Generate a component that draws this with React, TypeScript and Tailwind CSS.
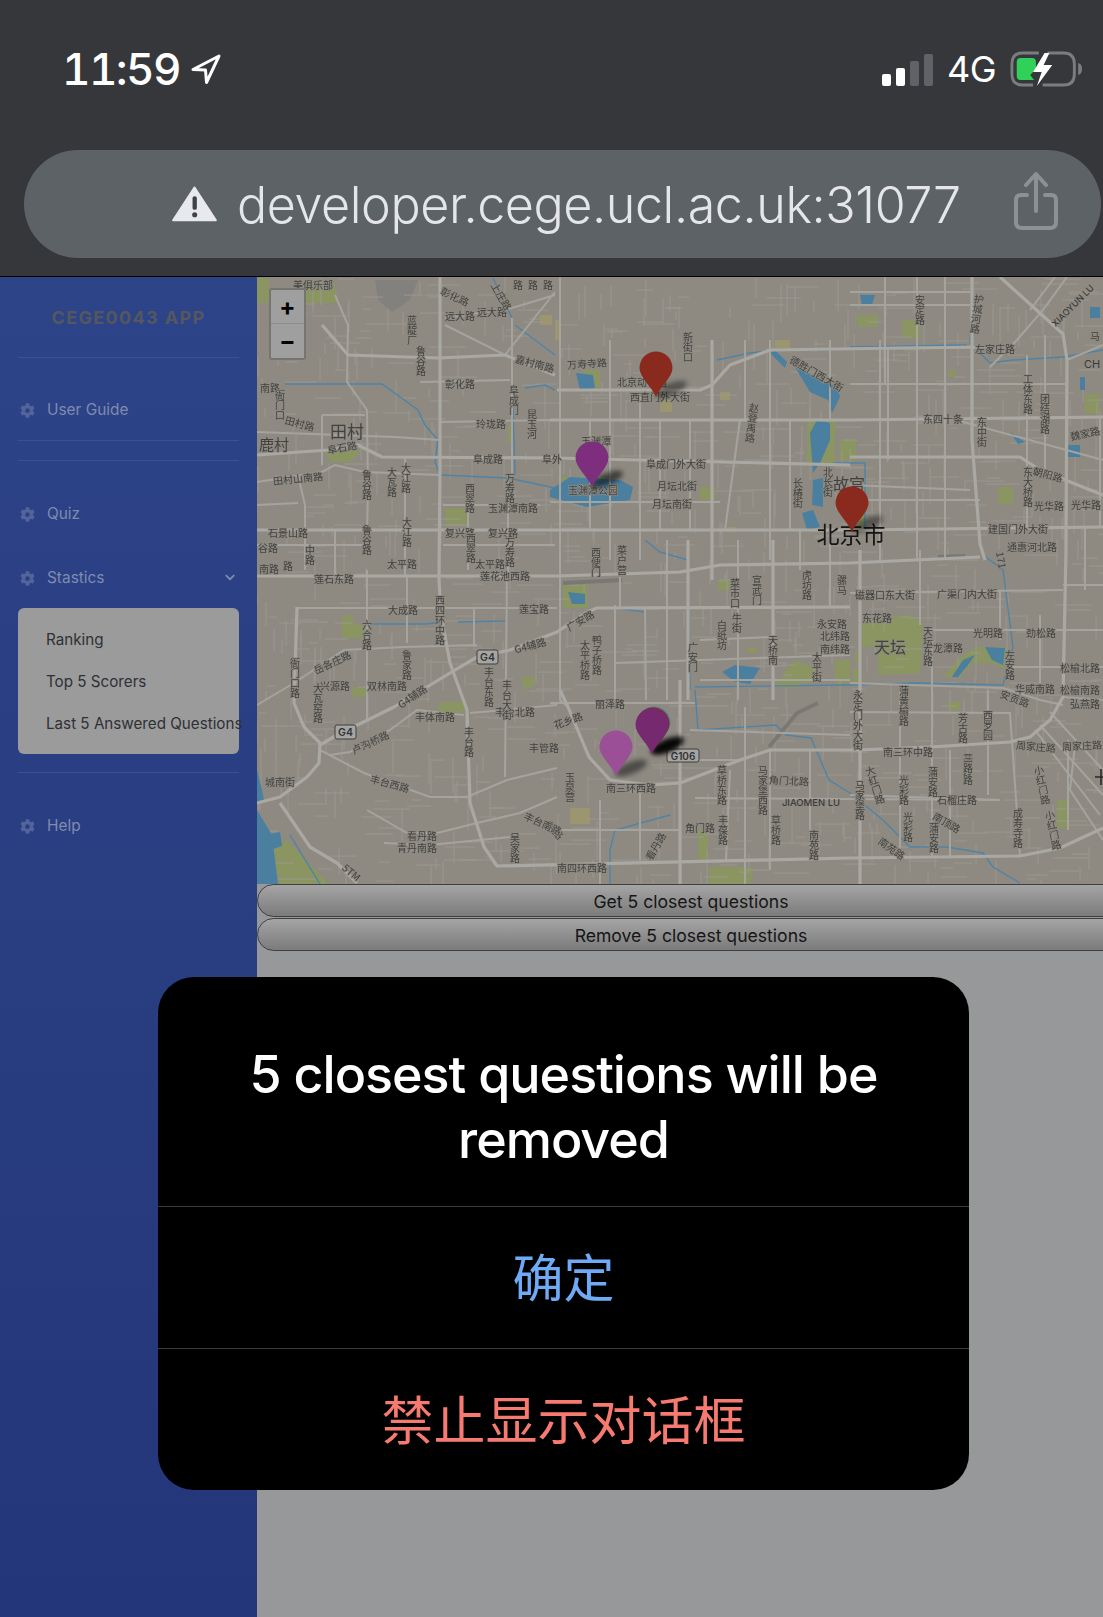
import React from "react";
import { FaCog, FaChevronDown } from "react-icons/fa";

const majorRoads: string[] = [
  "440,277 440,470 439,580 441,615 450,663 467,710 470,803 484,847 497,866 850,858 1020,856 1060,848 1103,828",
  "320,745 337,735 394,707 450,673 477,657 510,650 557,632 587,612 597,608 850,607",
  "1000,277 1063,334 1067,360 1066,550 1063,697 1050,720 1030,737 1010,742 930,747 857,750 770,750 740,760 680,783 650,785 610,780 589,757 568,707 560,690",
  "257,530 550,530 850,530 1103,527",
  "257,576 557,576 680,572 720,565 850,563 980,557",
  "257,455 328,450 358,445 382,457 555,458 850,465",
  "557,390 700,390 712,385 730,365 770,350 900,348 990,347",
  "322,325 348,355 438,358 505,355 555,375",
  "550,420 850,420 1103,417",
  "850,457 1020,457 1040,470 1103,495",
  "712,340 712,580",
  "972,277 972,440 980,544 985,560",
  "688,540 688,700",
  "773,540 773,700",
  "680,680 680,884",
  "860,550 860,884",
  "280,803 310,847 337,863 357,883",
  "297,607 294,703 304,727 320,743 319,763 307,777 280,797 257,803",
];

const midRoads: string[] = [
  "560,277 560,700 568,707",
  "257,705 294,683 344,650 404,647 477,645",
  "320,750 364,773 430,797 467,797 507,780 557,768",
  "330,755 350,752 390,730 417,710 464,715",
  "470,713 557,705",
  "367,810 407,833 437,833 477,823 520,813 557,797",
  "384,843 430,845 510,837",
  "367,570 367,720",
  "407,577 407,643",
  "507,570 505,777",
  "474,608 474,647",
  "297,608 557,608",
  "335,295 348,325 347,382 367,410 368,490 367,530",
  "445,325 505,355 555,292",
  "445,318 512,308 555,295",
  "420,382 510,380",
  "440,422 555,420",
  "257,432 395,437 440,440",
  "257,482 322,472 335,465 365,472 440,475",
  "298,475 305,505 305,570",
  "322,415 322,465",
  "322,415 365,415",
  "257,505 298,503",
  "257,545 368,545",
  "443,505 540,505",
  "443,545 555,545",
  "512,318 512,478",
  "468,488 468,570",
  "508,475 508,575",
  "405,457 405,577",
  "335,530 335,575",
  "610,340 610,560",
  "640,397 640,560",
  "770,340 770,560",
  "880,340 880,560",
  "740,420 725,530",
  "550,502 720,502",
  "610,465 610,530",
  "667,540 667,700",
  "738,540 738,700",
  "615,605 615,700",
  "615,663 850,655",
  "645,608 646,700",
  "700,640 773,637",
  "550,703 695,703",
  "745,707 745,884",
  "695,798 1000,800",
  "850,593 1063,590",
  "850,683 1003,688 1040,700 1063,705",
  "850,712 1010,713 1020,856",
  "932,640 932,858",
  "920,550 920,625",
  "988,690 988,795",
  "850,292 970,292",
  "850,305 970,305",
  "850,384 1065,384",
  "885,277 885,384",
  "888,347 888,460",
  "917,277 917,560",
  "945,277 945,560",
  "1027,355 1027,530",
  "1045,335 1045,470",
  "1067,360 1103,345",
  "1067,277 1043,310 1017,340 990,367",
  "1055,277 1030,310",
  "850,485 970,490",
  "850,500 980,500",
  "1063,585 1103,585",
  "930,630 1103,630",
  "1010,667 1103,667",
  "1063,697 1103,700",
  "1040,615 1040,690",
  "1050,712 1103,770",
  "1040,725 1103,795",
  "1035,730 1100,815",
  "1075,745 1070,790 1103,840",
  "900,690 900,860",
  "850,795 1000,800",
  "790,420 790,530",
  "830,340 830,420",
  "590,420 590,530",
  "660,420 660,530",
  "690,420 690,530",
  "745,340 745,420",
  "800,530 800,570",
  "830,530 830,607",
  "620,577 620,607",
  "700,680 850,680",
  "690,730 850,735",
  "695,760 740,760",
  "810,750 810,860",
  "770,750 770,870",
  "730,770 726,860",
  "600,800 600,884",
  "640,790 640,860",
  "550,830 680,830",
  "950,750 950,858",
  "1100,417 1100,527",
  "1085,527 1085,590",
  "1000,590 1000,640",
  "1068,740 1068,830",
  "945,417 1103,460",
];

const water: string[] = [
  "257,770 262,790 264,800 257,803",
  "257,810 272,835 278,884 257,884",
  "265,835 280,832 282,846 270,850",
  "550,490 570,477 620,480 633,487 630,500 587,507 550,497",
  "576,373 593,375 595,388 580,390",
  "810,433 817,420 830,423 830,440 820,463 813,473",
  "813,480 823,478 823,507 812,505",
  "802,513 813,510 820,527 807,530",
  "770,353 775,350 787,362 785,368",
  "795,367 837,387 840,397 832,413 828,400 810,392",
  "568,592 585,594 585,604 572,604",
  "722,672 735,665 760,668 750,684 735,682",
  "1080,377 1085,377 1085,390 1080,390",
  "1090,307 1100,307 1100,318 1090,318",
  "952,677 963,660 975,655 968,665 958,677",
  "985,647 1005,648 1003,665 992,660",
  "860,295 875,295 872,305 862,305",
  "1068,445 1080,445 1080,457 1068,457",
  "1010,432 1025,442 1018,444",
];

const parks: string[] = [
  "257,278 269,278 269,303 257,303",
  "305,285 335,285 338,303 305,303",
  "323,450 362,450 350,462 330,462",
  "445,508 468,508 468,526 445,526",
  "508,425 513,425 513,443 508,443",
  "341,617 352,615 354,623 365,627 365,638 342,638",
  "352,687 366,687 366,697 352,697",
  "520,677 535,677 535,685 525,690",
  "439,702 465,702 465,712 439,712",
  "270,847 287,840 329,884 280,884",
  "583,370 600,370 600,387 590,387",
  "560,477 605,477 605,485 560,485",
  "807,420 835,420 835,463 807,463",
  "840,440 856,440 856,460 840,460",
  "848,510 866,510 866,530 848,530",
  "902,320 920,320 920,338 902,338",
  "857,315 878,315 878,327 857,327",
  "948,370 955,370 955,377 948,377",
  "1085,394 1100,394 1100,414 1085,414",
  "998,487 1013,487 1013,504 998,504",
  "862,625 870,618 910,615 923,623 920,673 878,675 878,647 862,647",
  "943,677 960,657 977,647 1007,647 1003,668 990,663 973,663 960,677",
  "948,702 960,702 960,710 948,710",
  "855,652 860,652 860,662 855,662",
  "853,668 859,668 859,683 853,683",
  "1057,800 1067,800 1067,828 1057,828",
  "698,830 708,830 708,860 698,860",
  "709,867 754,867 750,884 709,884",
  "563,585 588,585 588,608 563,608",
  "718,580 730,580 730,590 718,590",
  "747,648 757,648 757,653 747,653",
  "783,673 796,660 817,670 817,683 783,683",
  "835,660 850,660 850,683 835,683",
  "776,680 800,680 800,687 776,687",
  "700,487 715,487 715,500 700,500",
];

const yellows: string[] = [
  "570,808 590,808 590,824 570,824",
  "660,400 672,400 672,412 660,412",
  "775,340 790,340 790,348 775,348",
  "727,527 735,527 735,532 727,532",
  "720,392 730,392 730,400 720,400",
  "555,320 560,320 560,340 555,340",
  "540,315 552,315 552,325 540,325",
];

const blueLines: string[] = [
  "285,384 382,384 418,410 425,425 438,440 435,462 440,475 508,478 555,488",
  "493,278 512,318 512,375 515,475",
  "515,325 555,355",
  "525,388 545,385 555,390",
  "717,360 750,353 777,350 833,350",
  "850,347 967,345",
  "973,297 970,343 990,363 1013,360 1063,357 1103,350",
  "850,685 917,683 1003,685 1013,647 1003,570 983,555",
  "850,793 883,820 910,847 947,847 983,853 993,867 1020,883",
  "698,730 776,725 786,735 811,738 829,780 850,793",
  "695,687 850,685",
  "695,690 698,730",
  "645,540 660,552 688,560 690,690",
  "615,608 645,612 646,690",
  "370,624 425,624 445,622",
  "458,622 505,621",
  "833,463 865,463 865,530",
  "610,850 615,830 670,815",
  "610,884 610,850",
  "290,835 320,884",
];

type Label = [string, number, number, number?, boolean?, number?];

const labels: Label[] = [
  ["美俱乐部", 313, 284], ["远大路", 460, 315], ["远大路", 492, 311], ["彰化路", 460, 383],
  ["玲珑路", 491, 423], ["田村路", 300, 423, 15], ["田村", 347, 430, 0, false, 17], ["鹿村", 274, 443, 0, false, 15],
  ["阜石路", 342, 447, -10], ["阜成路", 488, 458], ["南路", 270, 387], ["田村山南路", 298, 478, -6],
  ["石景山路", 288, 532], ["谷路", 268, 547], ["南路", 269, 568], ["太平路", 402, 563], ["太平路", 490, 563],
  ["复兴路", 460, 532], ["复兴路", 503, 532], ["玉渊潭南路", 513, 507], ["彰化路", 455, 296, 25],
  ["蓝靛厂", 412, 330, 0, true], ["鲁谷路", 421, 361, 0, true], ["阜成门", 514, 400, 0, true], ["昆玉河", 532, 424, 0, true],
  ["鲁谷路", 367, 485, 0, true], ["大瓦路", 392, 482, 0, true], ["大江路", 406, 478, 0, true], ["西翠路", 470, 498, 0, true],
  ["鲁谷路", 367, 540, 0, true], ["大江路", 407, 532, 0, true], ["西翠路", 471, 548, 0, true], ["万寿路", 510, 488, 0, true],
  ["万寿路", 510, 552, 0, true], ["衙门口", 280, 405, 0, true], ["中路", 310, 555, 0, true], ["路", 288, 565],
  ["上庄路", 502, 296, 60], ["路", 518, 285, 0, true], ["路", 533, 285, 0, true], ["路", 548, 285, 0, true], ["嘉村南路", 535, 363, 15],
  ["万寿寺路", 587, 363, -4], ["北京动物园", 642, 381], ["西直门外大街", 660, 396], ["玉渊潭公园", 593, 489],
  ["阜成门外大街", 676, 463], ["月坛北街", 677, 485], ["月坛南街", 672, 503], ["赵登禹路", 752, 423, 8, true],
  ["长椿街", 798, 493, 0, true], ["故宫", 849, 483, 0, false, 16], ["北长街", 828, 482, 0, true], ["新街口", 688, 347, 0, true],
  ["德胜门西大街", 817, 373, 30], ["阜外", 552, 458], ["玉渊潭", 596, 440], ["北京市", 851, 533, 0, false, 23],
  ["左家庄路", 995, 348], ["东四十条", 943, 418], ["东中街", 982, 432, 0, true], ["安定路", 920, 310, 0, true],
  ["护城河路", 977, 314, 8, true], ["朝阳路", 1048, 474, 15], ["建国门外大街", 1018, 528], ["通惠河北路", 1032, 546],
  ["光华路", 1049, 505], ["光华路", 1086, 504], ["东大桥路", 1028, 487, 0, true], ["工体东路", 1028, 394, 0, true],
  ["团结湖路", 1045, 414, 0, true], ["魏家路", 1085, 433, -12], ["马", 1095, 335], ["171", 1002, 560, 80],
  ["磁器口东大街", 885, 594], ["广渠门内大街", 967, 593], ["东花路", 877, 617], ["天坛", 890, 646, 0, false, 16],
  ["天坛东路", 928, 646, 0, true], ["龙潭路", 948, 647], ["光明路", 988, 632], ["劲松路", 1041, 632], ["左安路", 1010, 665, 0, true],
  ["松榆北路", 1080, 667], ["松榆南路", 1080, 689], ["华威南路", 1035, 688], ["弘燕路", 1085, 703], ["安贡路", 1015, 698, 20],
  ["南三环中路", 908, 751], ["周家庄路", 1036, 746, 5], ["周家庄路", 1082, 745, -3], ["石榴庄路", 957, 799],
  ["永定门外大街", 858, 720, 0, true], ["蒲黄榆路", 904, 706, 0, true], ["芳古路", 963, 728, 0, true], ["蒲方路", 968, 770, 0, true],
  ["成寿寺路", 1018, 828, 0, true], ["小红门路", 1042, 785, -12, true], ["小红门路", 1053, 830, -12, true],
  ["南苑路", 892, 848, 35], ["南顶路", 947, 822, 30], ["大红门路", 875, 785, -18, true], ["马家堡路", 860, 800, 0, true],
  ["光彩路", 904, 790, 0, true], ["光彩路", 908, 827, 0, true], ["蒲安路", 933, 782, 0, true], ["蒲安路", 934, 838, 0, true],
  ["西罗园", 988, 725, 0, true], ["三路", 968, 763, 0, true],
  ["丽泽路", 610, 703], ["南三环西路", 631, 787], ["角门北路", 789, 780, 3], ["南四环西路", 582, 867], ["角门路", 700, 827],
  ["马家堡西路", 763, 790, 0, true], ["草桥东路", 722, 785, 0, true], ["草桥路", 776, 830, 0, true], ["花乡路", 568, 720, -20],
  ["玉泉营", 570, 787, 0, true], ["看丹路", 655, 846, -60], ["丰葆路", 723, 830, 0, true], ["南苑路", 814, 845, 0, true], ["花路", 555, 830, 45],
  ["莲石东路", 334, 578], ["莲花池西路", 505, 575], ["大成路", 403, 609], ["莲宝路", 534, 608], ["西四环中路", 440, 620, 0, true],
  ["六合路", 367, 635, 0, true], ["鲁家路", 407, 665, 0, true], ["G4辅路", 530, 645, -15], ["G4辅路", 412, 696, -35],
  ["兴源路", 335, 685], ["双林南路", 387, 685], ["岳各庄路", 332, 662, -25], ["丰体南路", 435, 716], ["丰台北路", 515, 711],
  ["卢沟桥路", 370, 742, -25], ["丰台西路", 390, 783, 15], ["看丹路", 422, 835], ["青丹南路", 417, 847], ["丰台南路", 543, 823, 25],
  ["城南街", 280, 781], ["丰管路", 544, 747], ["大瓦窑路", 318, 703, 0, true], ["衙门口路", 295, 678, 0, true], ["丰台东路", 489, 687, 0, true],
  ["丰台大街", 507, 700, 0, true], ["丰台路", 469, 742, 0, true], ["吴家路", 515, 848, 0, true], ["5TM", 352, 872, 40],
  ["广安路", 580, 620, -30], ["太平桥路", 585, 660, 0, true], ["鸭子桥路", 597, 655, 0, true], ["广安门", 693, 657, 0, true],
  ["白纸坊", 722, 635, 0, true], ["菜市口", 735, 593, 0, true], ["牛街", 737, 623, 0, true], ["宣武门", 757, 590, 0, true],
  ["天桥南", 773, 650, 0, true], ["虎坊路", 807, 585, 0, true], ["骡马", 842, 585, 0, true], ["永安路", 832, 623], ["北纬路", 835, 635], ["南纬路", 835, 648],
  ["太平街", 817, 667, 0, true], ["西便门", 596, 562, 0, true], ["菜户营", 622, 560, 0, true],
];

function minorStreets(): string[] {
  let s = 7;
  const r = () => {
    s = (s * 16807) % 2147483647;
    return s / 2147483647;
  };
  const out: string[] = [];
  for (let i = 0; i < 1100; i++) {
    const x = 257 + r() * 846;
    const y = 277 + r() * 607;
    const l = 8 + r() * 30;
    out.push(r() > 0.5 ? `M${x.toFixed(0)} ${y.toFixed(0)}h${l.toFixed(0)}` : `M${x.toFixed(0)} ${y.toFixed(0)}v${l.toFixed(0)}`);
  }
  return out;
}

function Pin({ x, y, color, shadow = 0.55 }: { x: number; y: number; color: string; shadow?: number }) {
  return (
    <g transform={`translate(${x} ${y})`}>
      <ellipse cx="15" cy="-8" rx="17" ry="6" transform="rotate(-22 15 -8)" fill="#000" opacity={shadow} filter="url(#pinShadow)" />
      <path d="M0 0C-4 -10 -16.5 -20 -16.5 -29A16.5 16.5 0 1 1 16.5 -29C16.5 -20 4 -10 0 0Z" fill={color} />
    </g>
  );
}

function MapArt() {
  return (
    <svg viewBox="257 277 846 607" className="block h-[607px] w-[846px] font-['Noto_Sans_CJK_SC',sans-serif]">
      <defs>
        <filter id="soft" x="-2%" y="-2%" width="104%" height="104%">
          <feGaussianBlur stdDeviation="0.55" />
        </filter>
        <filter id="pinShadow" x="-50%" y="-50%" width="200%" height="200%">
          <feGaussianBlur stdDeviation="2.5" />
        </filter>
      </defs>
      <rect x="257" y="277" width="846" height="607" fill="#8e8a82" />
      <g filter="url(#soft)">
        <path d="M375 280L418 280L410 300L392 312L378 300Z" fill="#83817d" />
        {parks.map((p, i) => (
          <polygon key={i} points={p} fill="#8a9562" />
        ))}
        {yellows.map((p, i) => (
          <polygon key={i} points={p} fill="#9c9670" />
        ))}
        <path d={minorStreets().join("")} stroke="#9a9892" strokeWidth="0.9" fill="none" />
        {water.map((p, i) => (
          <polygon key={i} points={p} fill="#4b7f9f" />
        ))}
        {blueLines.map((p, i) => (
          <polyline key={i} points={p} fill="none" stroke="#4f83a6" strokeWidth="1.4" />
        ))}
        <path d="M769 747L797 713L818 703" stroke="#7a7873" strokeWidth="4" fill="none" />
        <path d="M563 583L622 580" stroke="#7a7873" strokeWidth="4" fill="none" />
        <path d="M938 557L965 556" stroke="#7a7873" strokeWidth="4" fill="none" />
        {midRoads.map((p, i) => (
          <polyline key={i} points={p} fill="none" stroke="#a5a39d" strokeWidth="2" />
        ))}
        {majorRoads.map((p, i) => (
          <polyline key={i} points={p} fill="none" stroke="#aaa8a2" strokeWidth="3.2" strokeLinejoin="round" />
        ))}
        {labels.map(([t, x, y, rot = 0, vert = false, size = 10], i) => (
          <text
            key={i}
            x={x}
            y={y}
            fontSize={size}
            textAnchor="middle"
            dominantBaseline={vert ? undefined : "central"}
            transform={rot ? `rotate(${rot} ${x} ${y})` : undefined}
            fill={size > 20 ? "#141414" : "#42423f"}
            stroke="#8e8a82"
            strokeWidth={size > 20 ? 0 : 1.6}
            paintOrder="stroke"
            className={vert ? "[writing-mode:vertical-rl]" : ""}
          >
            {t}
          </text>
        ))}
      </g>
      <g fontFamily="Inter, sans-serif" fontWeight="600" textAnchor="middle">
        <rect x="477" y="650" width="21" height="14" rx="2" fill="#a5a5a3" stroke="#3e3e3e" />
        <text x="487.5" y="661" fontSize="10.5" fill="#333">G4</text>
        <rect x="335" y="725" width="21" height="14" rx="2" fill="#a5a5a3" stroke="#3e3e3e" />
        <text x="345.5" y="736" fontSize="10.5" fill="#333">G4</text>
        <rect x="667" y="749" width="32" height="13" rx="2" fill="#a5a5a3" stroke="#3e3e3e" />
        <text x="683" y="759.5" fontSize="10" fill="#333">G106</text>
        <text x="1075" y="308" fontSize="9" fontWeight="500" fill="#3a3a38" transform="rotate(-45 1075 308)">XIAOYUN LU</text>
        <text x="811" y="806" fontSize="9.5" fontWeight="500" fill="#3a3a38">JIAOMEN LU</text>
        <text x="1092" y="368" fontSize="11" fontWeight="400" fill="#3a3a38">CH</text>
      </g>
      <path d="M1095 777H1103M1101 769V785" stroke="#2a2a2a" strokeWidth="1.6" fill="none" />
      <Pin x={656} y={397} color="#8a2a1f" shadow={0.4} />
      <Pin x={592} y={487} color="#7d2f7e" />
      <Pin x={852} y={532} color="#8a2a1f" shadow={0.4} />
      <Pin x={616} y={776} color="#9a4f96" shadow={0.45} />
      <g transform="translate(654 752)">
        <path d="M0 0C-4 -10 -16.5 -20 -16.5 -29A16.5 16.5 0 1 1 16.5 -29C16.5 -20 4 -10 0 0Z" fill="#4a7ea0" />
      </g>
      <Pin x={653} y={753} color="#8a2a1f" shadow={0.5} />
      <Pin x={652} y={754} color="#77296f" shadow={0.9} />
    </svg>
  );
}

function NavRow({ label, chevron }: { label: string; chevron?: boolean }) {
  return (
    <div className="flex h-10 items-center pl-[20px] pr-[20px]">
      <FaCog className="h-[15px] w-[15px] text-[#52649b]" />
      <span className="ml-[12px] text-[15.4px] text-[#7f8bb0]">{label}</span>
      {chevron && <FaChevronDown className="ml-auto -translate-y-px h-[11px] w-[14px] text-[#7f8bb0]" />}
    </div>
  );
}

function Rule({ className }: { className: string }) {
  return <div className={`mx-[18px] h-px bg-[#3d5090] ${className}`} />;
}

function PillButton({ label }: { label: string }) {
  return (
    <div className="flex h-[33px] w-[868px] shrink-0 items-center justify-center rounded-[17px] border border-[#3f3f3f] bg-gradient-to-b from-[#a5a5a5] to-[#7b7b7b] pt-[3px] text-[17.6px] text-[#151515]">
      {label}
    </div>
  );
}

export default function App() {
  return (
    <div className="relative h-[1617px] w-[1103px] overflow-hidden bg-[#97989a] font-['Inter','Noto_Sans_CJK_SC',sans-serif]">
      <header className="h-[277px] border-b border-black bg-[#36373b]">
        <div className="flex h-[36px] translate-y-[51px] items-center justify-between pl-[62px] pr-[20px] text-white">
          <div className="flex items-center">
            <span className="text-[44px] font-medium leading-none tracking-[-1.6px] [font-variant-numeric:tabular-nums]">11:59</span>
            <svg viewBox="0 0 32 32" className="ml-[10px] h-[32px] w-[32px]" fill="none" stroke="#fff" strokeWidth="3" strokeLinejoin="round">
              <path d="M29 3L3 16.5L15.5 17L16.5 29.5Z" />
            </svg>
          </div>
          <div className="flex items-center">
            <div className="flex h-[33px] items-end gap-[5px]">
              <div className="h-[12px] w-[9px] rounded-[2px] bg-white" />
              <div className="h-[18px] w-[9px] rounded-[2px] bg-white" />
              <div className="h-[25px] w-[9px] rounded-[2px] bg-[#606267]" />
              <div className="h-[32px] w-[9px] rounded-[2px] bg-[#606267]" />
            </div>
            <span className="ml-[14px] text-[36px] leading-none tracking-[-0.5px]">4G</span>
            <svg viewBox="0 0 76 36" className="ml-[14px] h-[36px] w-[73px]" fill="none" preserveAspectRatio="none">
              <path d="M30 2H13Q2 2 2 13V23Q2 34 13 34H24" stroke="#7b7c80" strokeWidth="3" />
              <path d="M39 2H56Q67 2 67 13V23Q67 34 56 34H34" stroke="#7b7c80" strokeWidth="3" />
              <path d="M71 12Q75 13 75 18Q75 23 71 24Z" fill="#7b7c80" />
              <path d="M11 7H23Q27 7 27 11V18L21 24L25 29H11Q7 29 7 25V11Q7 7 11 7Z" fill="#30d158" />
              <path d="M36 2L24 21H33L28 35L44 14H35L41 2Z" fill="#fff" />
            </svg>
          </div>
        </div>
        <div className="ml-[24px] flex h-[108px] w-[1077px] translate-y-[114px] items-center rounded-[54px] bg-[#5d6266] pl-[148px]">
          <svg viewBox="0 0 46 36" className="h-[36px] w-[45px]">
            <path d="M23 1.5L44.5 34.5H1.5Z" fill="#e8e9ed" stroke="#e8e9ed" strokeWidth="2.5" strokeLinejoin="round" />
            <rect x="21" y="10" width="4.4" height="14" rx="2" fill="#3f4245" />
            <circle cx="23.2" cy="29" r="2.6" fill="#3f4245" />
          </svg>
          <span className="ml-[20px] whitespace-nowrap pt-[3px] text-[50.2px] font-light leading-none tracking-[-0.4px] text-[#e5e6ea]">developer.cege.ucl.ac.uk:31077</span>
          <svg viewBox="0 0 46 60" className="ml-auto mb-[7px] mr-[42px] h-[60px] w-[46px]" fill="none" stroke="#8d9195" strokeWidth="4">
            <path d="M14 24H8Q3 24 3 29V51Q3 57 9 57H37Q43 57 43 51V29Q43 24 38 24H32" strokeLinecap="round" />
            <path d="M23 40V5M13 14L23 3L33 14" strokeLinecap="round" strokeLinejoin="round" />
          </svg>
        </div>
      </header>

      <div className="flex h-[1340px]">
        <aside className="h-full w-[257px] shrink-0 bg-gradient-to-b from-[#2e4488] to-[#24367a]">
          <div className="flex h-[80px] items-center justify-center text-[18px] font-bold tracking-[1.35px] text-[#55575e]">CEGE0043 APP</div>
          <Rule className="" />
          <div className="mt-[32px]"><NavRow label="User Guide" /></div>
          <Rule className="mt-[10px]" />
          <Rule className="mt-[19px]" />
          <div className="mt-[33px]"><NavRow label="Quiz" /></div>
          <div className="mt-[24px]"><NavRow label="Stastics" chevron /></div>
          <div className="mx-[18px] mt-[10px] h-[146px] rounded-[6px] bg-[#9b9b9b] pt-[11px] text-[15.2px] text-[#2f3036]">
            <div className="flex h-[42px] items-center whitespace-nowrap pl-[28px]">Ranking</div>
            <div className="flex h-[42px] items-center whitespace-nowrap pl-[28px]">Top 5 Scorers</div>
            <div className="flex h-[43px] items-center whitespace-nowrap pl-[28px]">Last 5 Answered Questions</div>
          </div>
          <Rule className="mt-[18px]" />
          <div className="mt-[33px]"><NavRow label="Help" /></div>
        </aside>
        <main className="w-[846px] overflow-hidden">
          <MapArt />
          <PillButton label="Get 5 closest questions" />
          <div className="mt-px"><PillButton label="Remove 5 closest questions" /></div>
        </main>
      </div>

      <div className="absolute left-[158px] top-[977px] w-[811px] rounded-[36px] bg-black text-center">
        <div className="flex h-[230px] items-center justify-center border-b border-[#3a3a3c] px-[50px] pt-[30px] text-[52px] font-medium leading-[65px] tracking-[-1px] text-white">
          <span>5 closest questions will be removed</span>
        </div>
        <div className="flex h-[142px] items-center justify-center border-b border-[#3a3a3c] pb-[4px] text-[51px] font-['Noto_Sans_CJK_SC',sans-serif] text-[#6eaaf5]">确定</div>
        <div className="flex h-[141px] items-center justify-center pb-[4px] text-[52px] font-['Noto_Sans_CJK_SC',sans-serif] text-[#f77a70]">禁止显示对话框</div>
      </div>

      <div className="absolute left-[269px] top-[288px] flex h-[72px] w-[37px] flex-col overflow-hidden rounded-[3px] border-2 border-[#77756f] bg-[#9f9f9f] text-black">
        <div className="flex h-[34px] items-center justify-center border-b border-[#8b8b8b] text-[24px] font-bold leading-none">+</div>
        <div className="flex flex-1 items-center justify-center text-[24px] font-bold leading-none">−</div>
      </div>
    </div>
  );
}
